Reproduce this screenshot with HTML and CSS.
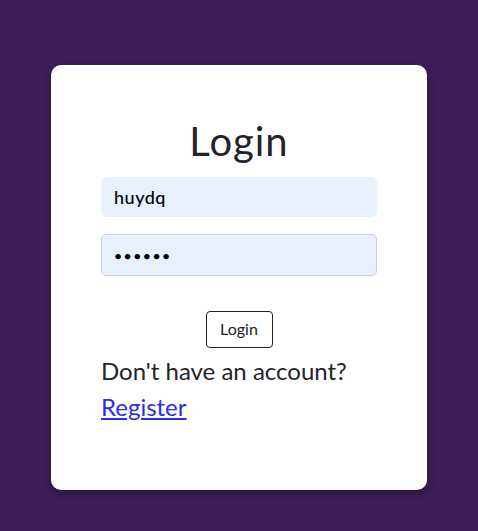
FILE: index.html
```html
<!DOCTYPE html>
<html lang="en">
<head>
<meta charset="utf-8">
<title>Login</title>
<link rel="stylesheet" href="styles.css">
</head>
<body>
<main class="page">
  <form class="card">
    <h1 class="title">Login</h1>
    <input class="field" type="text" value="huydq">
    <input class="field field-pass" type="password" value="123456">
    <div class="actions">
      <button class="btn" type="button">Login</button>
    </div>
    <p class="note">Don't have an account?</p>
    <a class="link" href="#">Register</a>
  </form>
</main>
</body>
</html>
```

FILE: styles.css
```css
* { box-sizing: border-box; }
html, body { margin: 0; padding: 0; }
body {
  background: #3b1f56;
  font-family: "Lato", "Open Sans", sans-serif;
  color: #222;
  width: 478px;
  height: 531px;
}
.page {
  padding: 65px 51px 0 51px;
}
.card {
  background: #fff;
  width: 376px;
  height: 425px;
  border-radius: 10px;
  box-shadow: 0 4px 10px rgba(0,0,0,0.3);
  padding: 52px 50px 0 50px;
  display: flex;
  flex-direction: column;
}
.title {
  margin: 0 0 12px 0;
  font-size: 40px;
  line-height: 48px;
  font-weight: 400;
  letter-spacing: 1px;
  text-align: center;
  color: #23232b;
}
.field {
  width: 276px;
  height: 40px;
  border: 1px solid #e8f0fe;
  border-radius: 5px;
  background: #e8f0fe;
  padding: 0 12px;
  font-family: inherit;
  font-size: 18px;
  font-weight: 500;
  letter-spacing: 0.5px;
  color: #000;
  outline: none;
}
.field-pass {
  margin-top: 17px;
  height: 42px;
  border-color: #c9d1dc;
  font-size: 14px;
  letter-spacing: 1.5px;
}
.actions {
  display: flex;
  justify-content: center;
  margin-top: 35px;
}
.btn {
  width: 67px;
  height: 37px;
  background: #fff;
  border: 1px solid #222;
  border-radius: 4px;
  font-family: inherit;
  font-size: 16px;
  color: #222;
  padding: 0 0 2px 0;
}
.note {
  margin: 8px 0 0 0;
  font-size: 24px;
  line-height: 30px;
  color: #23232b;
}
.link {
  margin-top: 6px;
  align-self: flex-start;
  font-size: 24px;
  line-height: 30px;
  color: #2a2af0;
  text-decoration: underline;
}
```
